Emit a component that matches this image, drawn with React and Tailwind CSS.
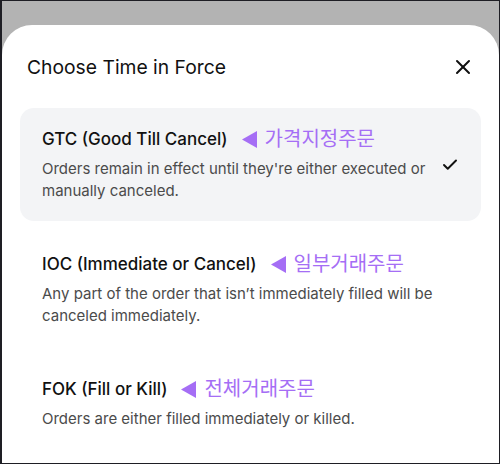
import { X, Check } from "lucide-react";

const options = [
  {
    title: "GTC (Good Till Cancel)",
    note: "가격지정주문",
    desc: "Orders remain in effect until they're either executed or manually canceled.",
    selected: true,
  },
  {
    title: "IOC (Immediate or Cancel)",
    note: "일부거래주문",
    desc: "Any part of the order that isn’t immediately filled will be canceled immediately.",
  },
  {
    title: "FOK (Fill or Kill)",
    note: "전체거래주문",
    desc: "Orders are either filled immediately or killed.",
  },
];

export default function App() {
  return (
    <div
      className="w-[500px] h-[464px] bg-[#b3b3b3] border border-l-2 border-[#1e1e24] overflow-hidden flex flex-col pt-[24px]"
      style={{ fontFamily: "Inter, 'Noto Sans CJK KR', sans-serif" }}
    >
      <div className="flex-1 bg-white rounded-t-[30px] px-[18px]">
        {/* 헤더 */}
        <div className="flex items-center justify-between pl-[7px] pr-[6px] pt-[29px] pb-[28px]">
          <h2 className="text-[19.3px] leading-[26px] text-[#111]">Choose Time in Force</h2>
          <X size={24} strokeWidth={2} color="#111" />
        </div>

        <ul className="flex flex-col gap-[12px]">
          {options.map((o) => (
            <li
              key={o.title}
              className={`flex items-center rounded-[14px] pl-[22px] pr-[22px] pt-[19px] pb-[19px] ${
                o.selected ? "bg-[#f3f4f6]" : ""
              }`}
            >
              <div className="flex-1">
                <div className="flex items-center gap-[14px]">
                  <span className="text-[17px] leading-[24px] font-medium text-[#111]">{o.title}</span>
                  <span className="flex items-center gap-[8px] text-[#a56ef5] text-[20px] leading-[24px]">
                    <svg width="15" height="17" viewBox="0 0 15 17" fill="#a56ef5">
                      <path d="M0 8.5 L15 0 L15 17 Z" />
                    </svg>
                    {o.note}
                  </span>
                </div>
                <p className="mt-[7px] text-[15px] leading-[22px] text-[#4b4b4b]">{o.desc}</p>
              </div>
              {o.selected && <Check size={18} strokeWidth={2.6} color="#111" className="ml-[4px]" />}
            </li>
          ))}
        </ul>
      </div>
    </div>
  );
}
